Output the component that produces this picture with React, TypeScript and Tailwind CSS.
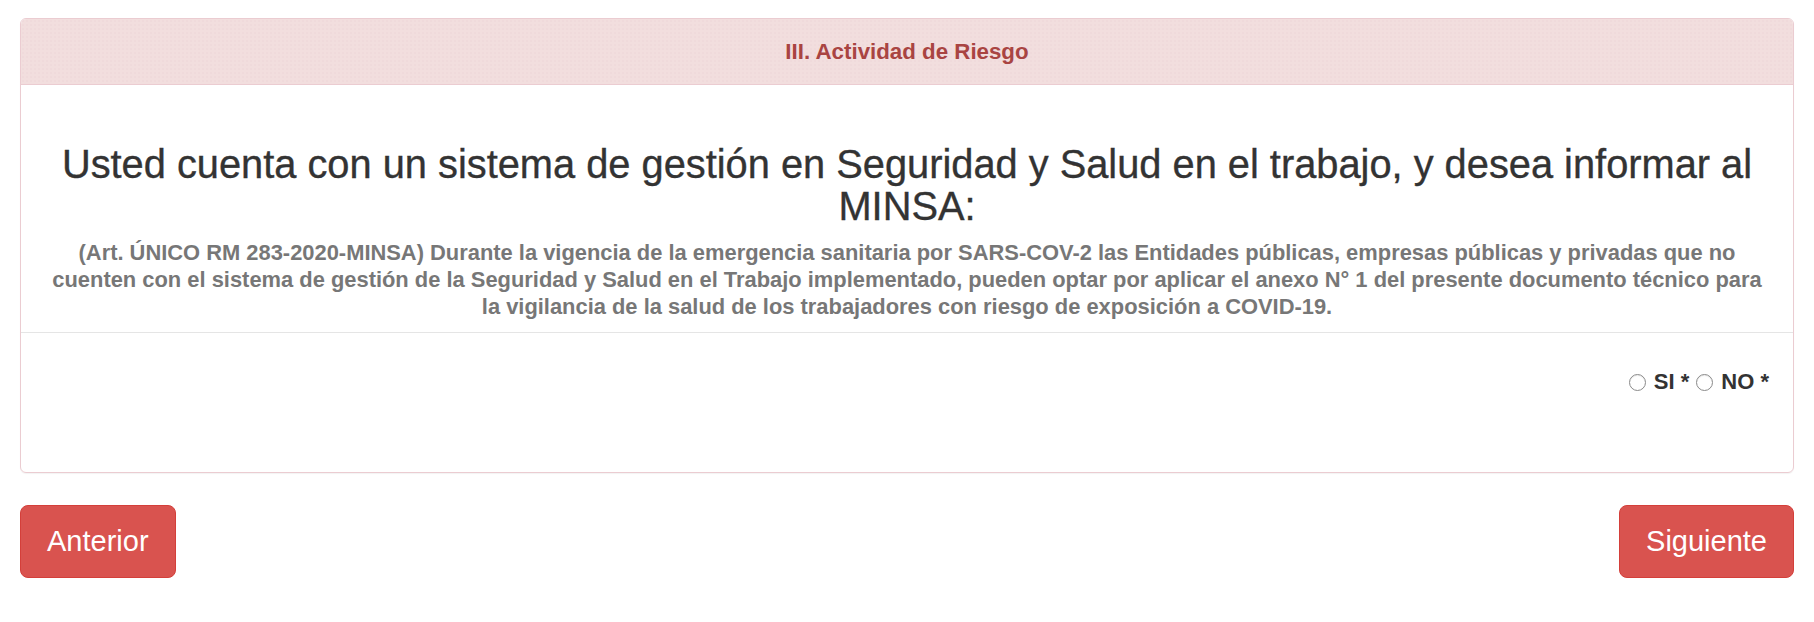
const RadioOption = ({ label }: { label: string }) => (
  <label className="inline-flex items-center">
    <span className="w-[17px] h-[17px] rounded-full border border-[#8a8a8a] bg-white mr-[8px] shadow-[inset_0_1px_1px_rgba(0,0,0,0.08)]" />
    <span className="font-bold">{label} *</span>
  </label>
);

const App = () => {
  return (
    <div className="min-h-screen bg-white px-[20px] pt-[18px] font-['Liberation_Sans',Arial,sans-serif] text-[#333]">
      {/* Panel */}
      <section className="border border-[#ebccd1] rounded-[6px] overflow-hidden shadow-[0_1px_1px_rgba(0,0,0,0.05)]">
        <header className="h-[66px] flex items-center justify-center bg-[#f2dede] bg-[radial-gradient(circle,#ebd2d5_0.5px,transparent_0.8px)] bg-[length:4px_4px] border-b border-[#ebccd1]">
          <h3 className="text-[22.3px] font-bold text-[#a94442]">III. Actividad de Riesgo</h3>
        </header>

        <div className="px-[20px] pt-[58px] pb-[12px] text-center">
          <h2 className="text-[39.8px] leading-[42px] text-[#333] mb-[12px] [-webkit-text-stroke:0.35px_#333]">
            Usted cuenta con un sistema de gestión en Seguridad y Salud en el trabajo, y desea informar al
            <br />
            MINSA:
          </h2>
          <p className="text-[21.9px] leading-[27px] font-bold text-[#777] whitespace-nowrap">
            (Art. ÚNICO RM 283-2020-MINSA) Durante la vigencia de la emergencia sanitaria por SARS-COV-2 las Entidades públicas, empresas públicas y privadas que no
            <br />
            cuenten con el sistema de gestión de la Seguridad y Salud en el Trabajo implementado, pueden optar por aplicar el anexo N° 1 del presente documento técnico para
            <br />
            la vigilancia de la salud de los trabajadores con riesgo de exposición a COVID-19.
          </p>
        </div>

        <div className="border-t border-[#e5e5e5] px-[24px] pt-[34px] pb-[75px] flex justify-end">
          <div className="flex items-center gap-[7px] text-[22px] leading-[30px] text-[#333]">
            <RadioOption label="SI" />
            <RadioOption label="NO" />
          </div>
        </div>
      </section>

      {/* Navigation */}
      <div className="flex justify-between mt-[32px]">
        <button className="h-[73px] px-[26px] rounded-[8px] bg-[#d9534f] border border-[#d43f3a] text-white text-[29px]">
          Anterior
        </button>
        <button className="h-[73px] px-[26px] rounded-[8px] bg-[#d9534f] border border-[#d43f3a] text-white text-[29px]">
          Siguiente
        </button>
      </div>
    </div>
  );
};

export default App;
